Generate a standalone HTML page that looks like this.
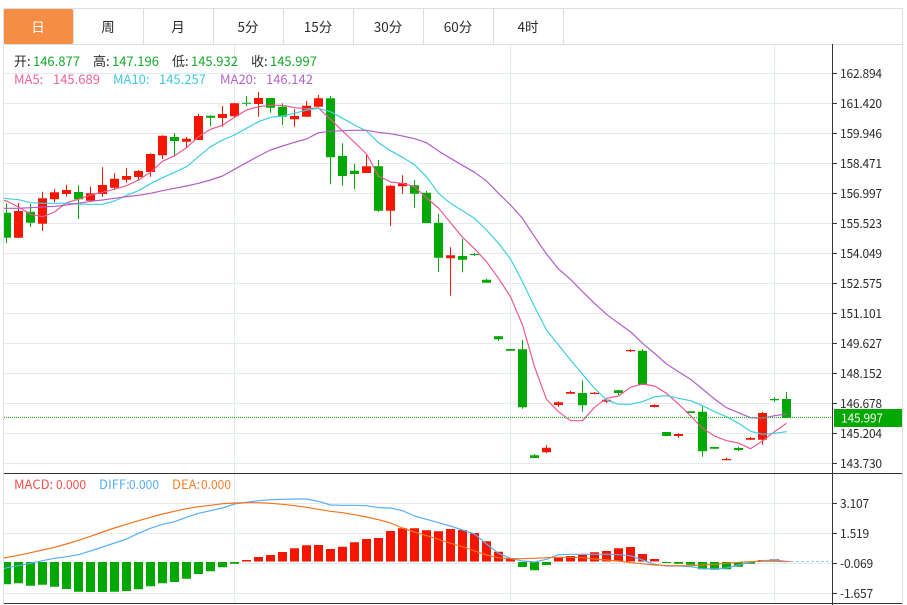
<!DOCTYPE html>
<html lang="zh">
<head>
<meta charset="utf-8">
<title>K线图</title>
<style>
html,body{margin:0;padding:0;background:#fff;width:907px;height:605px;overflow:hidden}
svg{display:block}
text{font-family:"Noto Sans CJK SC","Liberation Sans",sans-serif}
</style>
</head>
<body>
<svg width="907" height="605" viewBox="0 0 907 605" xmlns="http://www.w3.org/2000/svg">
<defs>
<clipPath id="c1"><rect x="4" y="44" width="828" height="429"/></clipPath>
<clipPath id="c2"><rect x="4" y="474" width="828" height="129"/></clipPath>
</defs>
<rect width="907" height="605" fill="#fff"/>
<!-- frame -->
<path d="M3.500 8.500H902.500M3.500 44.500H902.500M3.500 8V605M902.500 8V605" fill="none" stroke="#dcdfe0"/>
<!-- tabs -->
<rect x="4" y="9" width="69" height="35" rx="1.500" fill="#f58e44"/>
<path d="M73.500 9V44M143.500 9V44M213.500 9V44M283.500 9V44M353.500 9V44M423.500 9V44M493.500 9V44M563.500 9V44" stroke="#dcdfe0" fill="none"/>
<g font-size="13.500" text-anchor="middle" fill="#2b2b2b">
<text x="38" y="32" fill="#fff">日</text>
<text x="108" y="32">周</text>
<text x="178" y="32">月</text>
<text x="248" y="32">5分</text>
<text x="318" y="32">15分</text>
<text x="388" y="32">30分</text>
<text x="458" y="32">60分</text>
<text x="528" y="32">4时</text>
</g>
<!-- grid -->
<path d="M4 73.500H832M4 103.500H832M4 133.500H832M4 163.500H832M4 193.500H832M4 223.500H832M4 253.500H832M4 283.500H832M4 313.500H832M4 343.500H832M4 373.500H832M4 403.500H832M4 433.500H832M4 463.500H832M4 503.500H832M4 533.500H832M4 563.500H832M4 593.500H832M234.500 45V603M510.500 45V603M774.500 45V603" stroke="#e3ebf1" fill="none"/>
<!-- candles -->
<g clip-path="url(#c1)" fill="none">
<path stroke="#f51600" stroke-width="1" d="M18.500 203V238M42.500 191.700V231M54.500 189V202.300M66.500 184.700V196.700M90.500 186.700V201.700M102.500 167.300V196.700M114.500 173.300V190M126.500 168V182.700M138.500 170V180.700M150.500 153.300V176.700M162.500 135.300V159M186.500 137V148.300M198.500 114V140M222.500 106V126.700M234.500 103.300V117.300M258.500 92V116.700M294.500 109.300V126.700M306.500 101V116.700M318.500 95V107.300M366.500 154V173.300M390.500 185V226M402.500 175.300V193.700M450.500 247.300V295.700M546.500 445.300V453.300M558.500 401.300V407M570.500 391V393.700M594.500 392V394.300M606.500 398.300V403M630.500 349.300V352M654.500 404.300V407.300M678.500 433.300V437.700M726.500 457.700V460.300M750.500 437V440M762.500 412V444.700"/>
<path stroke="#f51600" stroke-width="9" d="M18.500 211V237.700M42.500 198.300V223.700M54.500 192.300V199.300M66.500 190V194M90.500 193.300V200.700M102.500 185V194M114.500 178.700V187.700M126.500 176V179.700M138.500 171V177M150.500 154V172M162.500 135.700V155.300M186.500 138.700V141.700M198.500 116V140M222.500 114V118M234.500 103.300V116.300M258.500 98V104M294.500 116V119.300M306.500 105.700V116.700M318.500 98.300V106.700M366.500 166.300V173M390.500 185.700V210.700M402.500 183V186.300M450.500 255.300V258.300M546.500 447.700V452.300M558.500 402.300V405M570.500 392V393.700M594.500 392.700V394M606.500 399.700V401.700M630.500 350V351.300M654.500 405V407M678.500 434V436M726.500 459V460.300M750.500 438V439.700M762.500 413V439.700"/>
<path stroke="#00a800" stroke-width="1" d="M6.500 203.300V243.300M30.500 204V227M78.500 185.300V219M174.500 133.300V156.700M210.500 115.300V126M246.500 96V106M270.500 98V112.700M282.500 103.300V125M330.500 96V184.300M342.500 143.300V185.700M354.500 164V189.300M378.500 160V211.700M414.500 180V207.700M426.500 191V223.300M438.500 213.700V272M462.500 239V272.300M474.500 252.700V256M486.500 278.700V282.700M498.500 336V340.700M522.500 340V408.700M534.500 454V458M582.500 380.300V411.700M618.500 390V395M642.500 349.300V385M666.500 432V436M702.500 406.700V456.700M714.500 446.700V449M738.500 446.700V451M774.500 397.300V401.700M786.500 392V418"/>
<path stroke="#00a800" stroke-width="9" d="M6.500 212.700V237.700M30.500 211.700V222.700M78.500 192V199.300M174.500 137V141M210.500 115.700V117.700M270.500 98V107.700M282.500 106.700V116.700M330.500 98.300V157.300M342.500 156V176M354.500 170.700V174M378.500 166.300V210.700M414.500 185.300V193.700M426.500 192.700V223M438.500 222.700V257.700M462.500 256V259.700M486.500 279.700V282.700M498.500 336.300V339.300M510.500 349V350.700M522.500 349.300V407.300M534.500 455.300V458M582.500 393V405.300M618.500 390.300V393M642.500 350.700V385M666.500 432V436M690.500 411.300V413M702.500 411.700V451.300M714.500 447V448.700M738.500 448V450M786.500 399V418"/>
<path stroke="#00a800" stroke-width="9" d="M246.500 102.700V103.700M474.500 254V255M774.500 399V400.300"/>
<!-- MA5 -->
<polyline stroke="#f0588f" stroke-width="1.200" stroke-linejoin="round" points="4,200.500 6.500,201 18.500,207 30.500,214.300 42.500,216.700 54.500,212 66.500,202.700 78.500,199.300 90.500,195 102.500,192.300 114.500,189.300 126.500,185.700 138.500,180 150.500,172.300 162.500,161.300 174.500,155.700 186.500,147.700 198.500,136.700 210.500,129.300 222.500,125.300 234.500,117.300 246.500,110 258.500,106.700 270.500,105.300 282.500,105.300 294.500,107.700 306.500,108.700 318.500,108 330.500,119.300 342.500,131 354.500,142.300 366.500,154 378.500,176 390.500,182 402.500,183.300 414.500,186.700 426.500,198 438.500,208 450.500,222.700 462.500,237.300 474.500,248.700 486.500,261.700 498.500,278.300 510.500,296.700 522.500,325 534.500,366.700 546.500,399.300 558.500,411.700 570.500,420.700 582.500,420.700 594.500,407.300 606.500,398.300 618.500,396 630.500,387.300 642.500,384 654.500,386 666.500,393.300 678.500,404 690.500,415.700 702.500,428.300 714.500,436 726.500,440.700 738.500,443 750.500,448.700 762.500,441 774.500,431.700 786.500,423.300"/>
<!-- MA10 -->
<polyline stroke="#3fcfe0" stroke-width="1.200" stroke-linejoin="round" points="4,198.300 18.500,199.700 30.500,202.700 42.500,203.300 54.500,203.300 66.500,203.300 78.500,204 90.500,204.300 102.500,204.300 114.500,201 126.500,195.300 138.500,190.700 150.500,183.700 162.500,177.700 174.500,172.300 186.500,166.700 198.500,156.700 210.500,146.700 222.500,140 234.500,135 246.500,128.300 258.500,121.700 270.500,117.300 282.500,116 294.500,113.300 306.500,110 318.500,108.300 330.500,111.700 342.500,118.300 354.500,125 366.500,131 378.500,142.700 390.500,150.700 402.500,157.300 414.500,164.700 426.500,176.700 438.500,193.300 450.500,203.300 462.500,210.700 474.500,218.300 486.500,230 498.500,243.300 510.500,259 522.500,281.700 534.500,306.700 546.500,330 558.500,345 570.500,360 582.500,374.300 594.500,388.300 606.500,400 618.500,404.300 630.500,404.300 642.500,401.700 654.500,396.700 666.500,395.700 678.500,398.300 690.500,400.700 702.500,405.700 714.500,411.700 726.500,416.700 738.500,423.300 750.500,431.300 762.500,434.300 774.500,433.300 786.500,431.700"/>
<!-- MA20 -->
<polyline stroke="#b35cc9" stroke-width="1.200" stroke-linejoin="round" points="4,208.300 18.500,208.300 30.500,207.700 42.500,207 54.500,206.300 66.500,205 78.500,203.300 90.500,201.300 102.500,200 114.500,198.300 126.500,196.700 138.500,195.300 150.500,193.300 162.500,190.700 174.500,188.300 186.500,186 198.500,183.300 210.500,180 222.500,176 234.500,169.300 246.500,162.700 258.500,156 270.500,150 282.500,146 294.500,142.300 306.500,139 318.500,132.700 330.500,131.300 342.500,130.700 354.500,130.300 366.500,130.300 378.500,132.300 390.500,133.700 402.500,136 414.500,138.700 426.500,142.700 438.500,151 450.500,158.300 462.500,165.300 474.500,172.300 486.500,181 498.500,193.300 510.500,205 522.500,218.300 534.500,236.700 546.500,254 558.500,269 570.500,279.300 582.500,291.700 594.500,303.300 606.500,314.300 618.500,323.300 630.500,331.700 642.500,343.300 654.500,353.300 666.500,364 678.500,371.700 690.500,379.300 702.500,389 714.500,399 726.500,407.700 738.500,412.700 750.500,417.700 762.500,418.300 774.500,415.700 786.500,414"/>
</g>
<!-- current price line -->
<path d="M4 417.500H832" stroke="#2fae2f" stroke-width="1.300" stroke-dasharray="1 1" fill="none"/>
<!-- MACD -->
<g clip-path="url(#c2)" fill="none">
<path d="M786 561.500H832" stroke="#8fd3ea" stroke-dasharray="3 2"/>
<path stroke="#00a800" stroke-width="9" d="M6.500 562V584.300M18.500 562V583.300M30.500 562V585.700M42.500 562V584.700M54.500 562V586.700M66.500 562V589M78.500 562V591.700M90.500 562V592M102.500 562V592M114.500 562V591.700M126.500 562V591M138.500 562V589.300M150.500 562V586.300M162.500 562V583.300M174.500 562V582M186.500 562V578.700M198.500 562V574M210.500 562V571.300M222.500 562V567.300M234.500 562V563.700M522.500 562V567M534.500 562V570.300M546.500 562V565M666.500 562V563M678.500 562V563.700M690.500 562V564.700M702.500 562V569.300M714.500 562V569.700M726.500 562V569.300M738.500 562V566.700M750.500 562V563.700"/>
<path stroke="#f51600" stroke-width="9" d="M246.500 560V561.500M258.500 557V561.500M270.500 555V561.500M282.500 552V561.500M294.500 548.300V561.500M306.500 545.300V561.500M318.500 545V561.500M330.500 549V561.500M342.500 546.700V561.500M354.500 542.300V561.500M366.500 539V561.500M378.500 538V561.500M390.500 531V561.500M402.500 528.300V561.500M414.500 528.300V561.500M426.500 530.300V561.500M438.500 531.300V561.500M450.500 529V561.500M462.500 530V561.500M474.500 533V561.500M486.500 541.300V561.500M498.500 551.700V561.500M510.500 558.300V561.500M558.500 557.700V561.500M570.500 556V561.500M582.500 554.700V561.500M594.500 552.300V561.500M606.500 551V561.500M618.500 548.300V561.500M630.500 547V561.500M642.500 554V561.500M654.500 559V561.500M762.500 560V561.500M774.500 559.300V561.500M786.500 561V561.500"/>
<polyline stroke="#5aaef5" stroke-width="1.200" stroke-linejoin="round" points="4,569 6.500,567.700 18.500,565.700 30.500,563.300 42.500,560.700 54.500,558.300 66.500,556.700 78.500,554.700 90.500,551 102.500,547 114.500,543 126.500,539 138.500,533.300 150.500,528.300 162.500,524.300 174.500,521.700 186.500,517.300 198.500,513.300 210.500,510.700 222.500,508 234.500,504 246.500,502.300 258.500,500.700 270.500,499.700 282.500,499.300 294.500,499 306.500,499 318.500,501.300 330.500,505 342.500,505.300 354.500,505.300 366.500,505.700 378.500,507.700 390.500,508 402.500,510.700 414.500,516 426.500,519.300 438.500,522.700 450.500,526 462.500,530 474.500,534 486.500,544 498.500,553.300 510.500,558.300 522.500,561 534.500,562 546.500,559.300 558.500,554.700 570.500,554.300 582.500,554.300 594.500,554.300 606.500,554.300 618.500,554.700 630.500,555.700 642.500,560 654.500,564.300 666.500,566 678.500,566 690.500,566.700 702.500,568.700 714.500,569 726.500,568 738.500,565 750.500,562 762.500,560.700 774.500,560 786.500,561.300"/>
<polyline stroke="#f5731e" stroke-width="1.200" stroke-linejoin="round" points="4,558 18.500,555.300 30.500,552.700 42.500,550 54.500,547.300 66.500,544 78.500,540.300 90.500,536.300 102.500,532 114.500,528 126.500,524.300 138.500,520.700 150.500,517.300 162.500,514 174.500,511.300 186.500,508.700 198.500,506.700 210.500,505.300 222.500,503.700 234.500,503 246.500,502.700 258.500,502.700 270.500,503.300 282.500,504.300 294.500,505.700 306.500,507.300 318.500,509.300 330.500,511.300 342.500,512.700 354.500,514.700 366.500,517 378.500,519.700 390.500,523 402.500,528 414.500,532 426.500,535.700 438.500,539.300 450.500,543.300 462.500,546.700 474.500,551 486.500,555 498.500,557.700 510.500,558.700 522.500,558.700 534.500,558.300 546.500,557.700 558.500,557.300 570.500,557.300 582.500,557.700 594.500,559 606.500,560 618.500,561 630.500,562.700 642.500,563.700 654.500,565 666.500,565.700 678.500,565.700 690.500,565.700 702.500,565 714.500,564.300 726.500,563.300 738.500,562.300 750.500,561.700 762.500,561.300 774.500,561.300 786.500,561.700"/>
</g>
<!-- axes -->
<path d="M4 473.500H902M4 603.500H902M832.500 44V605" stroke="#333" fill="none"/>
<path d="M833 73.500H837M833 103.500H837M833 133.500H837M833 163.500H837M833 193.500H837M833 223.500H837M833 253.500H837M833 283.500H837M833 313.500H837M833 343.500H837M833 373.500H837M833 403.500H837M833 433.500H837M833 463.500H837M833 503.500H837M833 533.500H837M833 563.500H837M833 593.500H837" stroke="#333" fill="none"/>
<g font-size="12" fill="#2b2b2b" letter-spacing="-0.200">
<text x="840" y="78">162.894</text>
<text x="840" y="108">161.420</text>
<text x="840" y="138">159.946</text>
<text x="840" y="168">158.471</text>
<text x="840" y="198">156.997</text>
<text x="840" y="228">155.523</text>
<text x="840" y="258">154.049</text>
<text x="840" y="288">152.575</text>
<text x="840" y="318">151.101</text>
<text x="840" y="348">149.627</text>
<text x="840" y="378">148.152</text>
<text x="840" y="408">146.678</text>
<text x="840" y="438">145.204</text>
<text x="840" y="468">143.730</text>
<text x="840" y="508">3.107</text>
<text x="840" y="538">1.519</text>
<text x="840" y="568">-0.069</text>
<text x="840" y="598">-1.657</text>
</g>
<rect x="834" y="409" width="68" height="18" fill="#00a800"/>
<text x="841" y="422.500" font-size="12" letter-spacing="-0.200" fill="#fff">145.997</text>
<!-- legends -->
<g font-size="13">
<text x="14" y="66" fill="#2b2b2b">开:</text><text x="33" y="66" fill="#14a82a">146.877</text>
<text x="93" y="66" fill="#2b2b2b">高:</text><text x="112" y="66" fill="#14a82a">147.196</text>
<text x="172" y="66" fill="#2b2b2b">低:</text><text x="191" y="66" fill="#14a82a">145.932</text>
<text x="251" y="66" fill="#2b2b2b">收:</text><text x="270" y="66" fill="#14a82a">145.997</text>
<text x="14" y="84" fill="#f0629a">MA5:</text><text x="53" y="84" fill="#f0629a">145.689</text>
<text x="113" y="84" fill="#3fc8e0">MA10:</text><text x="159" y="84" fill="#3fc8e0">145.257</text>
<text x="220" y="84" fill="#b566cc">MA20:</text><text x="266" y="84" fill="#b566cc">146.142</text>
</g>
<g font-size="12">
<text x="14" y="489" font-size="13" fill="#f5504a">MACD:</text><text x="56" y="489" fill="#f5504a">0.000</text>
<text x="99" y="489" font-size="13" fill="#5aaef5">DIFF:</text><text x="129" y="489" fill="#5aaef5">0.000</text>
<text x="172" y="489" font-size="13" fill="#f5802e">DEA:</text><text x="201" y="489" fill="#f5802e">0.000</text>
</g>
</svg>
</body>
</html>
